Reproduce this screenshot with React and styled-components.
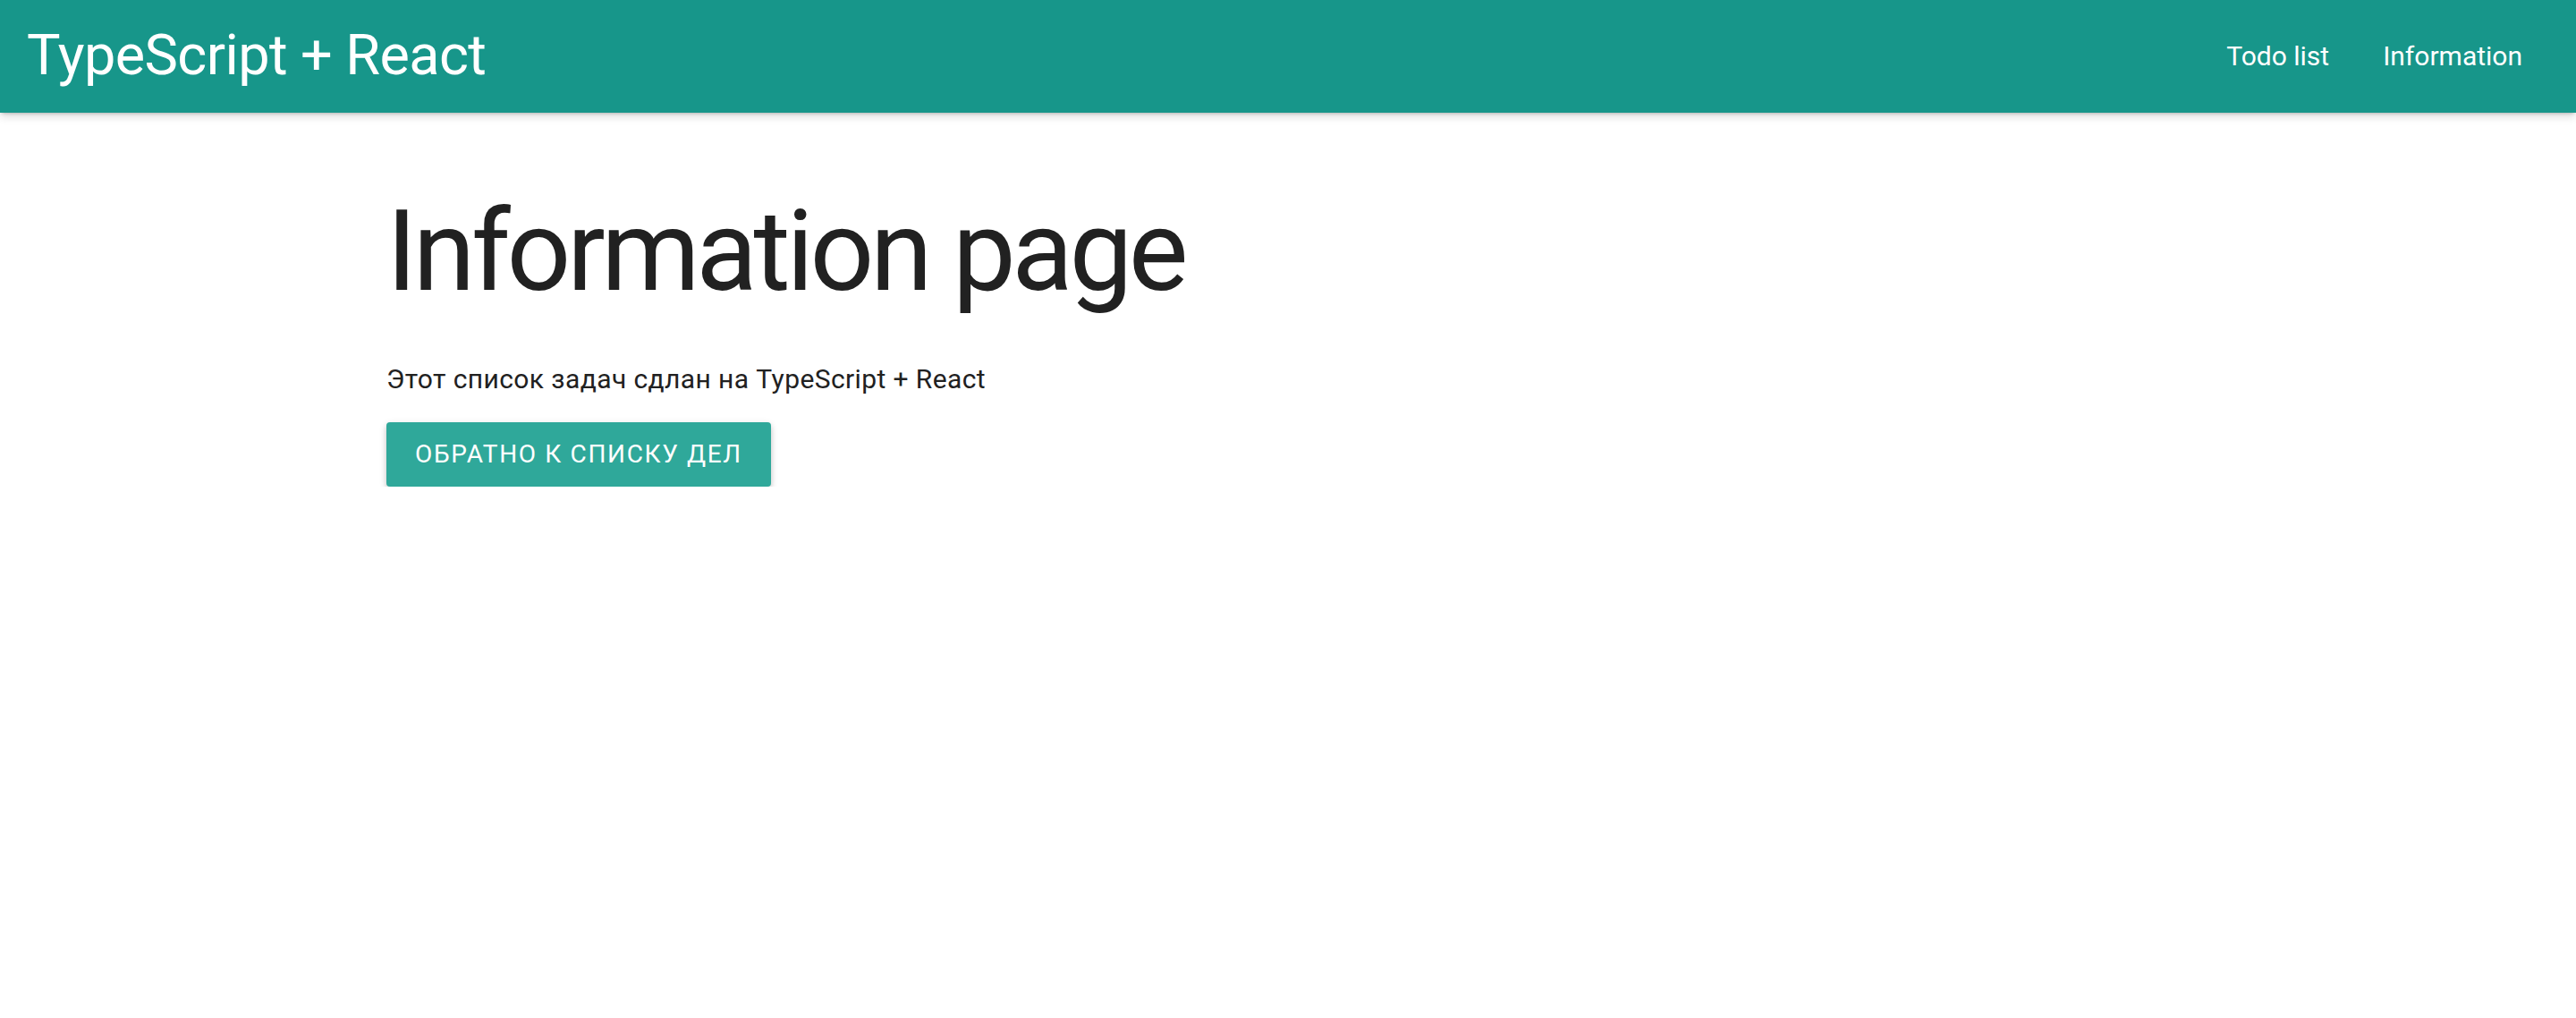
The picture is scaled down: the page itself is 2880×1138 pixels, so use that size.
import styled, { createGlobalStyle } from "styled-components";

const GlobalStyle = createGlobalStyle`
  html, body {
    margin: 0;
    padding: 0;
    background: #fff;
  }
  body {
    font-family: Roboto, "Noto Sans", "Liberation Sans", sans-serif;
    color: #212121;
    line-height: 1.5;
  }
`;

const Nav = styled.nav`
  display: flex;
  align-items: center;
  justify-content: space-between;
  height: 126px;
  padding: 0 30px;
  background-color: #17968a;
  color: #fff;
  box-shadow: 0 4px 10px 0 rgba(0, 0, 0, 0.14), 0 2px 4px -2px rgba(0, 0, 0, 0.3);
`;

const Brand = styled.a`
  font-size: 63px;
  line-height: 126px;
  letter-spacing: -0.6px;
  color: #fff;
  text-decoration: none;
  margin-top: -2px;
`;

const Links = styled.ul`
  display: flex;
  margin: 0;
  padding: 0;
  list-style: none;
`;

const NavLink = styled.a`
  display: block;
  padding: 0 30px;
  font-size: 30px;
  line-height: 126px;
  color: #fff;
  text-decoration: none;
  margin-top: -1px;
`;

const Container = styled.main`
  width: 70%;
  margin: 0 auto;
`;

const Title = styled.h1`
  margin: 86px 0 50px;
  font-size: 126px;
  font-weight: 400;
  line-height: 1.1;
  letter-spacing: -4.4px;
`;

const Text = styled.p`
  margin: 0 0 26px;
  font-size: 30px;
  line-height: 1.5;
  letter-spacing: 0.4px;
`;

const Button = styled.button`
  display: inline-flex;
  align-items: center;
  height: 72px;
  padding: 0 32px;
  border: none;
  border-radius: 4px;
  background-color: #2fa89a;
  color: #fff;
  font-family: inherit;
  font-size: 28px;
  letter-spacing: 1.65px;
  text-transform: uppercase;
  cursor: pointer;
  box-shadow: 0 4px 6px 0 rgba(0, 0, 0, 0.14), 0 2px 8px 0 rgba(0, 0, 0, 0.12),
    0 6px 2px -4px rgba(0, 0, 0, 0.2);
`;

const App = () => {
  return (
    <>
      <GlobalStyle />
      <Nav>
        <Brand href="#">TypeScript + React</Brand>
        <Links>
          <li>
            <NavLink href="#">Todo list</NavLink>
          </li>
          <li>
            <NavLink href="#">Information</NavLink>
          </li>
        </Links>
      </Nav>
      <Container>
        <Title>Information page</Title>
        <Text>Этот список задач сдлан на TypeScript + React</Text>
        <Button>Обратно к списку дел</Button>
      </Container>
    </>
  );
};

export default App;
